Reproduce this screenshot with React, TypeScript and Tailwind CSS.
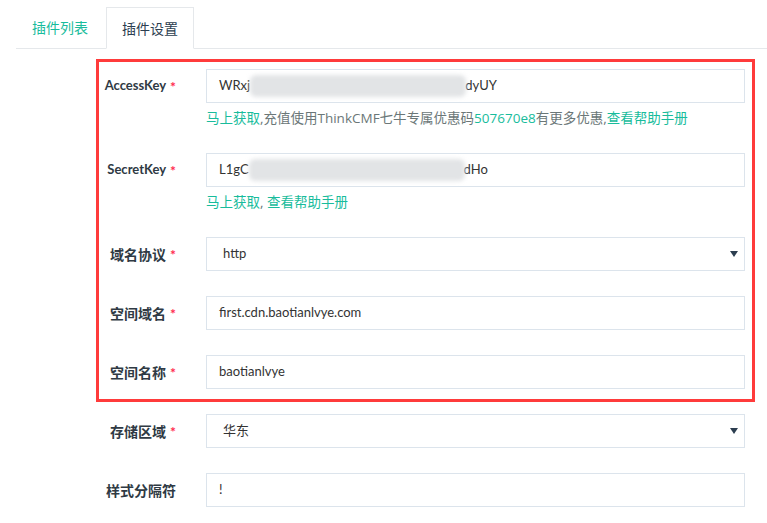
import React from "react";

const font = { fontFamily: '"Open Sans", "Noto Sans CJK SC", sans-serif' };
const lato = { fontFamily: 'Lato, "Noto Sans CJK SC", sans-serif' };

function Label({ text, req = true, latin = false }: { text: string; req?: boolean; latin?: boolean }) {
  return (
    <div
      className={
        latin
          ? "w-[176px] h-[34px] flex items-center justify-end text-[13px] font-bold text-[#2f3a44] shrink-0"
          : "w-[176px] h-[34px] flex items-center justify-end text-[14px] font-bold text-[#2f3a44] shrink-0"
      }
      style={lato}
    >
      <span>{text}</span>
      {req && <span className="ml-[4px] text-[14px] text-[#ff2a4e]">*</span>}
    </div>
  );
}

function Blur() {
  return (
    <span className="inline-block align-middle w-[216px] h-[22px] bg-[#e2e4e6] blur-[2px] rounded-[6px]" />
  );
}

function Row({
  label,
  req = true,
  latin = false,
  children,
  help,
}: {
  label: string;
  req?: boolean;
  latin?: boolean;
  children: React.ReactNode;
  help?: React.ReactNode;
}) {
  return (
    <div className="flex items-start">
      <Label text={label} req={req} latin={latin} />
      <div className="ml-[30px] w-[539px]">
        {children}
        {help && (
          <div className="pt-[5px] h-[25px] leading-[20px] text-[13.5px] text-[#6b7778] whitespace-nowrap">
            {help}
          </div>
        )}
      </div>
    </div>
  );
}

function Input({ children }: { children: React.ReactNode }) {
  return (
    <div
      className="h-[34px] border border-[#dce4ec] bg-white pl-[12px] flex items-center text-[13px] text-[#333] whitespace-nowrap overflow-hidden"
      style={lato}
    >
      {children}
    </div>
  );
}

function Select({ value }: { value: string }) {
  return (
    <div
      className="h-[34px] border border-[#dce4ec] bg-white pl-[16px] pr-[6px] flex items-center justify-between text-[13px] text-[#333]"
      style={lato}
    >
      <span>{value}</span>
      <span className="w-0 h-0 border-l-[4px] border-r-[4px] border-t-[6px] border-l-transparent border-r-transparent border-t-[#2c3e50]" />
    </div>
  );
}

const G = ({ children }: { children: React.ReactNode }) => (
  <span className="text-[#18bc9c]">{children}</span>
);

export default function App() {
  return (
    <div className="relative w-[767px] h-[523px] bg-white overflow-hidden" style={font}>
      <div className="pt-[7px] pl-4">
        <div className="flex border-b border-[#e5e8eb] h-[42px]">
          <div className="h-[41px] px-4 mr-[2px] flex items-center text-[14px] text-[#18bc9c]">
            插件列表
          </div>
          <div className="h-[42px] px-[15px] flex items-center border border-[#e5e8eb] border-b-white bg-white text-[14px] text-[#2c3e50]">
            插件设置
          </div>
        </div>
      </div>

      <div className="mt-[20px] flex flex-col gap-[25px]">
        <Row
          label="AccessKey"
          latin
          help={
            <>
              <G>马上获取</G>,充值使用ThinkCMF七牛专属优惠码<G>507670e8</G>有更多优惠,<G>查看帮助手册</G>
            </>
          }
        >
          <Input>
            <span>WRxj</span>
            <Blur />
            <span className="-ml-[1px]">dyUY</span>
          </Input>
        </Row>
        <Row
          label="SecretKey"
          latin
          help={
            <>
              <G>马上获取</G>, <G>查看帮助手册</G>
            </>
          }
        >
          <Input>
            <span>L1gC</span>
            <Blur />
            <span className="-ml-[1px]">dHo</span>
          </Input>
        </Row>
        <Row label="域名协议">
          <Select value="http" />
        </Row>
        <Row label="空间域名">
          <Input>first.cdn.baotianlvye.com</Input>
        </Row>
        <Row label="空间名称">
          <Input>baotianlvye</Input>
        </Row>
        <Row label="存储区域">
          <Select value="华东" />
        </Row>
        <Row label="样式分隔符" req={false}>
          <Input>!</Input>
        </Row>
      </div>

      <div className="absolute left-[96px] top-[59px] w-[659px] h-[343px] border-[3px] border-[#ff3b3b] pointer-events-none" />
    </div>
  );
}
